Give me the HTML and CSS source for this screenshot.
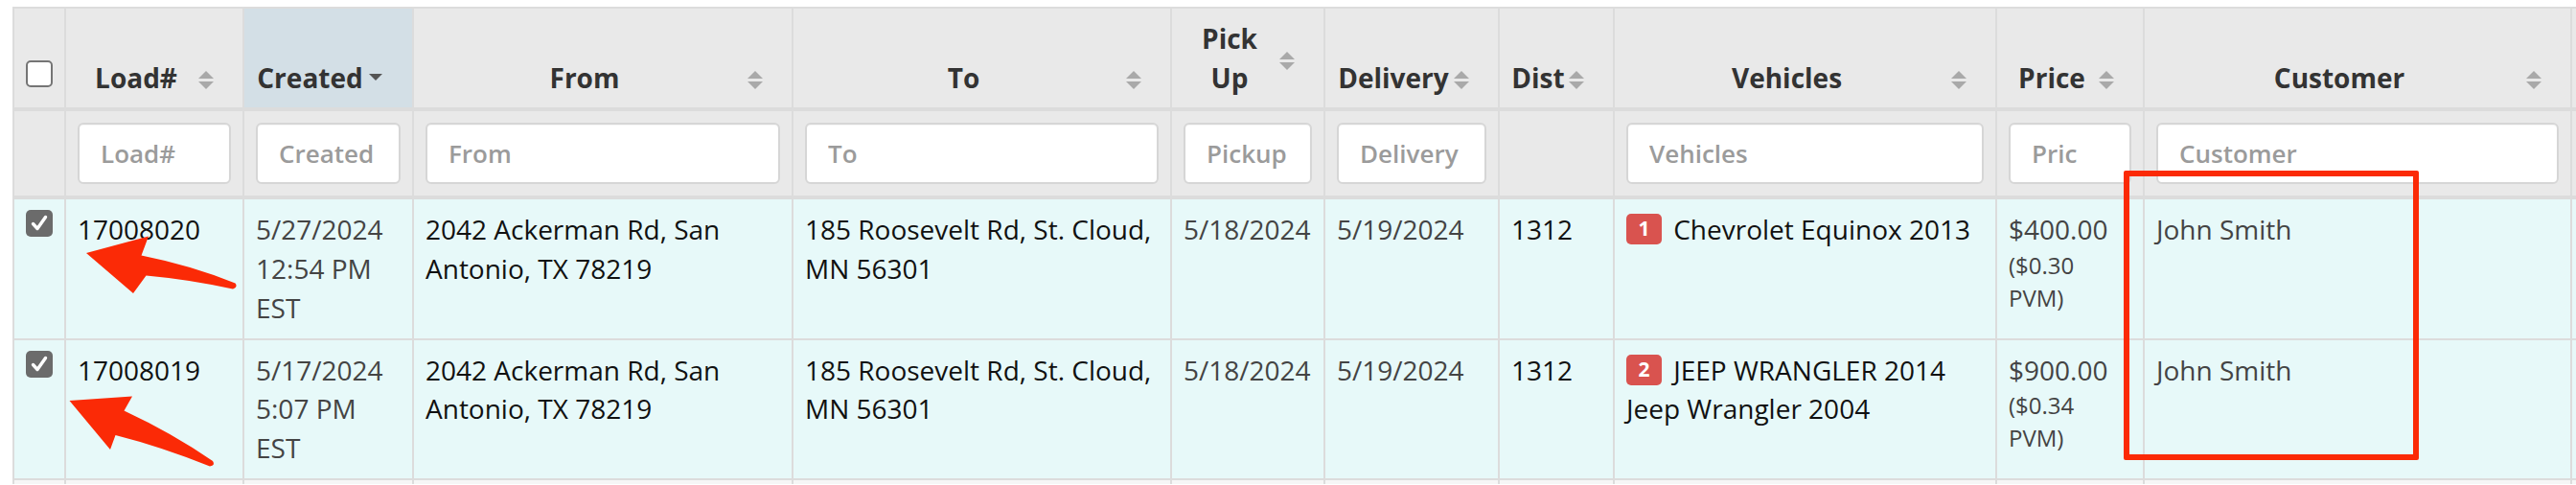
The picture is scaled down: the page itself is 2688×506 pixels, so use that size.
FILE: index.html
```html
<!DOCTYPE html>
<html>
<head>
<meta charset="utf-8">
<title>Loads</title>
<link rel="stylesheet" href="styles.css">
</head>
<body>
<div class="page">
  <table class="loads">
    <colgroup>
      <col class="c-check">
      <col class="c-load">
      <col class="c-created">
      <col class="c-from">
      <col class="c-to">
      <col class="c-pickup">
      <col class="c-delivery">
      <col class="c-dist">
      <col class="c-vehicles">
      <col class="c-price">
      <col class="c-customer">
      <col class="c-extra">
    </colgroup>
    <thead>
      <tr class="head-row">
        <th class="th-check"><span class="cb"></span></th>
        <th>Load#<span class="sort"></span></th>
        <th class="sorted">Created<span class="caret"></span></th>
        <th>From<span class="sort"></span></th>
        <th>To<span class="sort"></span></th>
        <th>Pick Up<span class="sort sort-high"></span></th>
        <th>Delivery<span class="sort"></span></th>
        <th>Dist<span class="sort"></span></th>
        <th>Vehicles<span class="sort"></span></th>
        <th>Price<span class="sort"></span></th>
        <th>Customer<span class="sort"></span></th>
        <th class="th-extra"></th>
      </tr>
      <tr class="filter-row">
        <td></td>
        <td><input class="filter" type="text" placeholder="Load#"></td>
        <td><input class="filter" type="text" placeholder="Created"></td>
        <td><input class="filter" type="text" placeholder="From"></td>
        <td><input class="filter" type="text" placeholder="To"></td>
        <td><input class="filter" type="text" placeholder="Pickup"></td>
        <td><input class="filter" type="text" placeholder="Delivery"></td>
        <td></td>
        <td><input class="filter" type="text" placeholder="Vehicles"></td>
        <td><input class="filter filter-clip" type="text" placeholder="Price"></td>
        <td><input class="filter" type="text" placeholder="Customer"></td>
        <td></td>
      </tr>
    </thead>
    <tbody>
      <tr class="load-row">
        <td class="td-check"><span class="cb on"><svg viewBox="0 0 28 28" width="28" height="28"><path d="M7.5 14.5 L12 19.5 L20.5 7.5" fill="none" stroke="#fff" stroke-width="3.4" stroke-linecap="round" stroke-linejoin="round"/></svg></span></td>
        <td>17008020</td>
        <td class="muted">5/27/2024 12:54 PM EST</td>
        <td>2042 Ackerman Rd, San Antonio, TX 78219</td>
        <td>185 Roosevelt Rd, St. Cloud, MN 56301</td>
        <td class="muted">5/18/2024</td>
        <td class="muted">5/19/2024</td>
        <td>1312</td>
        <td><span class="count">1</span>Chevrolet Equinox 2013</td>
        <td class="muted">$400.00<div class="ppm">($0.30 PVM)</div></td>
        <td class="muted">John Smith</td>
        <td></td>
      </tr>
      <tr class="load-row">
        <td class="td-check"><span class="cb on"><svg viewBox="0 0 28 28" width="28" height="28"><path d="M7.5 14.5 L12 19.5 L20.5 7.5" fill="none" stroke="#fff" stroke-width="3.4" stroke-linecap="round" stroke-linejoin="round"/></svg></span></td>
        <td>17008019</td>
        <td class="muted">5/17/2024 5:07 PM EST</td>
        <td>2042 Ackerman Rd, San Antonio, TX 78219</td>
        <td>185 Roosevelt Rd, St. Cloud, MN 56301</td>
        <td class="muted">5/18/2024</td>
        <td class="muted">5/19/2024</td>
        <td>1312</td>
        <td><span class="count">2</span>JEEP WRANGLER 2014<br>Jeep Wrangler 2004</td>
        <td class="muted">$900.00<div class="ppm">($0.34 PVM)</div></td>
        <td class="muted">John Smith</td>
        <td></td>
      </tr>
      <tr class="peek-row">
        <td></td><td></td><td></td><td></td><td></td><td></td><td></td><td></td><td></td><td></td><td></td><td></td>
      </tr>
    </tbody>
  </table>

  <div class="highlight-box"></div>
  <svg class="arrows" width="2688" height="506" viewBox="0 0 2688 506">
    <path d="M90 264 L155 246.5 L147.5 266.5 Q200 277 245.5 295.5 Q248.5 299.5 243 301.5 Q197 291.5 152.5 287.5 L139 306 Z" fill="#fb2a06"/>
    <path d="M72.5 418 L138 413.5 L129.5 428.5 Q180 452 222 481 Q225 485.5 219 486.5 Q168 466 120.5 454 L115 469 Z" fill="#fb2a06"/>
  </svg>
</div>
</body>
</html>
```

FILE: styles.css
```css
html, body {
  margin: 0;
  padding: 0;
  overflow: hidden;
  background: #ffffff;
}

body {
  width: 2688px;
  height: 506px;
  font-family: "Open Sans", "DejaVu Sans", sans-serif;
  font-size: 28px;
  line-height: 40.7px;
  color: #111111;
}

.page {
  position: relative;
  width: 2688px;
  height: 506px;
  padding: 7px 0 0 13px;
  box-sizing: border-box;
  overflow: hidden;
}

.loads {
  border-collapse: collapse;
  table-layout: fixed;
  width: 2674px;
}

.c-check { width: 54px; }
.c-load { width: 186px; }
.c-created { width: 177px; }
.c-from { width: 396px; }
.c-to { width: 395px; }
.c-pickup { width: 160px; }
.c-delivery { width: 182px; }
.c-dist { width: 120px; }
.c-vehicles { width: 399px; }
.c-price { width: 154px; }
.c-customer { width: 446px; }
.c-extra { width: 5px; }

.loads th,
.loads td {
  border: 2px solid #dcdcdc;
}

/* header */
.head-row th {
  position: relative;
  background: #e9e9e9;
  color: #333333;
  font-weight: 700;
  text-align: center;
  vertical-align: bottom;
  padding: 11px 50px 11px 12px;
  border-bottom-width: 4px;
}

.head-row th.sorted {
  background: #d3dfe6;
}

.head-row th.th-check {
  padding: 11px 12px;
}

.head-row th.th-extra {
  padding: 0;
  border-right: none;
}

.sort {
  position: absolute;
  right: 30px;
  bottom: 19px;
  width: 16px;
  height: 19px;
}

.sort::before,
.sort::after {
  content: "";
  position: absolute;
  left: 0;
  width: 0;
  height: 0;
  border-left: 8px solid transparent;
  border-right: 8px solid transparent;
}

.sort::before {
  top: 0;
  border-bottom: 8px solid #a9a9a9;
}

.sort::after {
  top: 11px;
  border-top: 8px solid #a9a9a9;
}

.sort.sort-high {
  bottom: 39px;
}

.caret {
  position: absolute;
  right: 31px;
  bottom: 28px;
  width: 0;
  height: 0;
  border-left: 7.5px solid transparent;
  border-right: 7.5px solid transparent;
  border-top: 7px solid #555555;
}

/* checkboxes */
.cb {
  display: block;
  box-sizing: border-box;
  width: 28px;
  height: 28px;
  margin: 0 auto 10px;
  border: 2px solid #757575;
  border-radius: 5px;
  background: #ffffff;
}

.cb.on {
  margin: 11px auto 0;
  border: none;
  background: #6b6b6b;
}

.cb svg {
  display: block;
}

/* filter row */
.filter-row td {
  background: #e9e9e9;
  padding: 12px;
  border-bottom-width: 4px;
}

.filter-row td:last-child {
  padding: 0;
  border-right: none;
}

.filter {
  display: block;
  box-sizing: border-box;
  width: 100%;
  height: 64px;
  margin: 0;
  padding: 0 10px 0 22px;
  border: 2px solid #d6d6d6;
  border-radius: 6px;
  background: #ffffff;
  font-family: "Open Sans", "DejaVu Sans", sans-serif;
  font-size: 26px;
  font-weight: 600;
  color: #555555;
  box-shadow: inset 0 1px 1px rgba(0, 0, 0, 0.04);
}

.filter::placeholder {
  color: #9b9b9b;
  font-weight: 600;
  opacity: 1;
}

.filter.filter-clip {
  padding-right: 54px;
}

/* body rows */
.load-row td {
  background: #e7f9f9;
  padding: 11px 12px;
  vertical-align: top;
}

.load-row td.td-check {
  padding: 0 12px;
}

.load-row td:last-child {
  padding: 0;
  border-right: none;
}

.muted {
  color: #444444;
}

.count {
  display: inline-block;
  background: #d9534f;
  color: #ffffff;
  font-size: 21px;
  font-weight: 700;
  line-height: 1;
  padding: 5px 12.6px 6px;
  border-radius: 5px;
  vertical-align: 4px;
  margin-right: 12px;
}

.ppm {
  width: min-content;
  font-size: 24px;
  line-height: 33.5px;
}

.peek-row td {
  background: #f6f6f6;
  height: 4px;
  padding: 0;
  border-bottom: none;
}

.peek-row td:last-child {
  border-right: none;
}

/* annotations drawn over the table */
.highlight-box {
  position: absolute;
  left: 2216px;
  top: 178px;
  width: 308px;
  height: 302px;
  box-sizing: border-box;
  border: 6px solid #fb2a06;
  border-radius: 2px;
}

.arrows {
  position: absolute;
  left: 0;
  top: 0;
  pointer-events: none;
}
```
